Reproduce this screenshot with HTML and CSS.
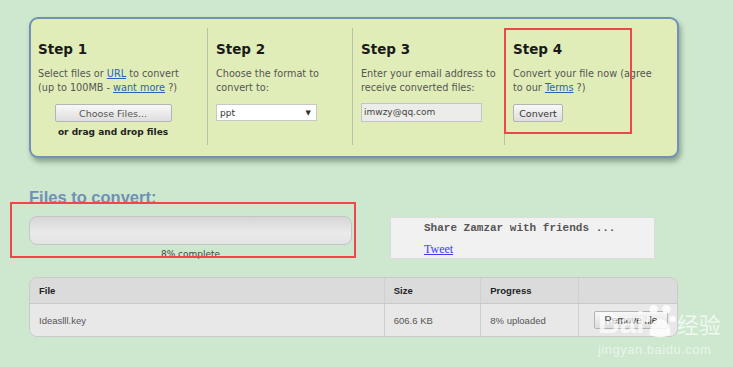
FILE: index.html
```html
<!DOCTYPE html>
<html lang="en">
  <head>
    <meta charset="UTF-8" />
    <meta name="viewport" content="width=device-width, initial-scale=1.0" />
    <link rel="stylesheet" href="styles.css">
    <title>Zamzar - Convert Files</title>
  </head>
  <body>
    <main class="page">
      <div class="steps">
        <div class="step step-1">
          <h3>Step 1</h3>
          <p>Select files or <a href="#">URL</a> to convert<br>(up to 100MB - <a href="#">want more</a> ?)</p>
          <div class="choose">
            <button class="btn choose-btn">Choose Files...</button>
            <span class="drop">or drag and drop files</span>
          </div>
        </div>
        <div class="step step-2">
          <h3>Step 2</h3>
          <p>Choose the format to<br>convert to:</p>
          <div class="select">ppt <span class="arrow">&#9660;</span></div>
        </div>
        <div class="step step-3">
          <h3>Step 3</h3>
          <p>Enter your email address to<br>receive converted files:</p>
          <div class="email">imwzy@qq.com</div>
        </div>
        <div class="step step-4">
          <h3>Step 4</h3>
          <p>Convert your file now (agree<br>to our <a href="#">Terms</a> ?)</p>
          <button class="btn convert-btn">Convert</button>
          <div class="mark mark-step"></div>
        </div>
      </div>

      <h2 class="files-title">Files to convert:</h2>

      <div class="files-row">
        <div class="progress-wrap">
          <div class="progress"></div>
          <div class="progress-label">8% complete</div>
          <div class="mark mark-progress"></div>
        </div>
        <div class="share">
          <div class="share-text">Share Zamzar with friends ...</div>
          <a class="tweet" href="#">Tweet</a>
        </div>
      </div>

      <table class="files">
        <thead>
          <tr>
            <th class="c-file">File</th>
            <th class="c-size">Size</th>
            <th class="c-prog">Progress</th>
            <th class="c-act"></th>
          </tr>
        </thead>
        <tbody>
          <tr>
            <td>Ideaslll.key</td>
            <td>606.6 KB</td>
            <td>8% uploaded</td>
            <td><button class="btn remove-btn">Remove file</button></td>
          </tr>
        </tbody>
      </table>

      <div class="watermark">
        <div class="wm-logo">
          <span>Bai</span>
          <svg width="32" height="36" viewBox="0 0 30 34">
            <circle cx="9" cy="6" r="4" fill="#fff" />
            <circle cx="21" cy="6" r="4" fill="#fff" />
            <circle cx="3" cy="15" r="3" fill="#fff" />
            <circle cx="27" cy="15" r="3" fill="#fff" />
            <path d="M5 30 C5 20 10 15 15 15 C20 15 25 20 25 30 C20 33 10 33 5 30 Z" fill="#fff" />
          </svg>
          <span class="wm-cn">经验</span>
        </div>
        <div class="wm-url">jingyan.baidu.com</div>
      </div>
    </main>
  </body>
</html>
```

FILE: styles.css
```css
* {
  margin: 0;
  padding: 0;
  box-sizing: border-box;
}

body {
  background-color: #cde8cf;
  font-family: "DejaVu Sans", Verdana, sans-serif;
  color: #555;
}

.page {
  position: relative;
  width: 733px;
  height: 367px;
  padding: 17px 0 0 29px;
  overflow: hidden;
}

a {
  color: #2a62b8;
}

/* steps panel */
.steps {
  display: flex;
  width: 650px;
  height: 141px;
  padding: 9px 0 11px 0;
  background-color: #e1edb8;
  border: 2px solid #7191b9;
  border-radius: 9px;
  box-shadow: 2px 4px 5px rgba(60, 80, 60, 0.45);
}

.step {
  position: relative;
  padding: 0 8px;
  border-left: 1px solid #b8c0a5;
}

.step-1 {
  width: 176px;
  border-left: none;
  padding-left: 7px;
}
.step-2 {
  width: 145px;
}
.step-3 {
  width: 152px;
}
.step-4 {
  flex: 1;
}

.step h3 {
  margin-top: 13px;
  font-size: 13.5px;
  font-weight: bold;
  color: #1a1a1a;
  line-height: 17px;
}

.step p {
  margin-top: 9px;
  font-size: 9.7px;
  line-height: 14px;
  color: #555;
  white-space: nowrap;
}

.btn {
  font-family: "DejaVu Sans", Verdana, sans-serif;
  font-size: 9.5px;
  color: #333;
  background: linear-gradient(#f8f8f8, #dedede);
  border: 1px solid #b4b4b4;
  border-radius: 2px;
}

.choose {
  display: flex;
  flex-direction: column;
  align-items: center;
  width: 150px;
  margin: 9px 0 0 0;
}

.choose-btn {
  width: 117px;
  height: 18px;
  color: #555;
}

.drop {
  margin-top: 5px;
  font-size: 9px;
  font-weight: bold;
  color: #222;
}

.select {
  display: flex;
  justify-content: space-between;
  align-items: center;
  width: 101px;
  height: 17px;
  margin-top: 9px;
  padding: 0 5px 0 3px;
  background-color: #fff;
  border: 1px solid #c8c8c8;
  font-size: 9px;
  color: #333;
}

.arrow {
  font-size: 7px;
}

.email {
  width: 121px;
  height: 19px;
  margin-top: 8px;
  padding: 3px 2px;
  background-color: #ececea;
  border: 1px solid #c4c4c4;
  font-size: 9px;
  color: #444;
}

.convert-btn {
  width: 50px;
  height: 18px;
  margin-top: 9px;
}

/* red annotation frames */
.mark {
  position: absolute;
  border: 2px solid #f0464a;
}

.mark-step {
  top: 0;
  left: -1px;
  width: 128px;
  height: 106px;
}

.mark-progress {
  top: -14px;
  left: -19px;
  width: 346px;
  height: 56px;
}

/* files section */
.files-title {
  margin-top: 30px;
  font-family: "Liberation Sans", Arial, sans-serif;
  font-size: 16.5px;
  font-weight: bold;
  line-height: 18px;
  color: #7190b4;
}

.files-row {
  display: flex;
  align-items: flex-start;
  margin-top: 10px;
}

.progress-wrap {
  position: relative;
  width: 323px;
}

.progress {
  height: 29px;
  border: 1px solid #c4c4c4;
  border-radius: 8px;
  background: linear-gradient(#d6d6d6, #eaeaea 60%, #e4e4e4);
}

.progress-label {
  margin-top: 4px;
  text-align: center;
  font-size: 9px;
  line-height: 11px;
  color: #444;
}

.share {
  width: 265px;
  height: 42px;
  margin: 1px 0 0 38px;
  padding: 3px 0 0 33px;
  background-color: #f1f1f1;
  border: 1px solid #dcdcdc;
}

.share-text {
  font-family: "Liberation Mono", "Courier New", monospace;
  font-size: 11px;
  font-weight: bold;
  color: #555;
  line-height: 14px;
}

.tweet {
  display: inline-block;
  margin-top: 7px;
  font-family: "Liberation Serif", "Times New Roman", serif;
  font-size: 12px;
  color: #3b3bee;
}

/* file table */
.files {
  width: 649px;
  margin-top: 17px;
  border-collapse: separate;
  border-spacing: 0;
  border: 1px solid #c9c9c9;
  border-radius: 8px;
  overflow: hidden;
  font-family: "Liberation Sans", Arial, sans-serif;
  font-size: 9.5px;
}

.files th,
.files td {
  text-align: left;
  padding: 0 9px;
  border-left: 1px solid #cfcfcf;
}

.files th:first-child,
.files td:first-child {
  border-left: none;
}

.files th {
  height: 26px;
  background-color: #dbdbdb;
  color: #222;
  font-weight: bold;
  border-bottom: 1px solid #c9c9c9;
}

.files td {
  height: 32px;
  background-color: #e8e8e8;
  color: #555;
}

.c-file {
  width: 356px;
}
.c-size {
  width: 97px;
}
.c-prog {
  width: 98px;
}

.remove-btn {
  width: 74px;
  height: 18px;
  margin-left: 6px;
  font-family: "Liberation Sans", Arial, sans-serif;
  font-size: 10px;
}

/* baidu watermark */
.watermark {
  position: absolute;
  left: 598px;
  top: 299px;
  color: rgba(255, 255, 255, 0.85);
  opacity: 0.85;
}

.wm-logo {
  display: flex;
  align-items: flex-end;
  height: 40px;
  font-family: "Liberation Sans", Arial, sans-serif;
  font-size: 30px;
  font-weight: bold;
  line-height: 32px;
}

.wm-logo svg {
  margin: 0 1px 0 -1px;
}

.wm-cn {
  font-family: "Noto Sans CJK SC", sans-serif;
  font-size: 22px;
  font-weight: normal;
}

.wm-url {
  margin-top: 3px;
  font-family: "Liberation Sans", Arial, sans-serif;
  font-size: 13px;
  letter-spacing: 0.5px;
  color: rgba(255, 255, 255, 0.7);
}
```
